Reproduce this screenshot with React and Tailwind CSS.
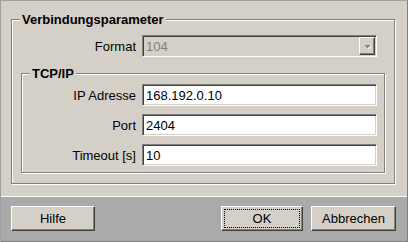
import React from "react";

const Field = ({ value }) => (
  <div className="w-[235px] h-[22px] bg-white border border-t-[#808080] border-l-[#808080] border-r-white border-b-white shadow-[inset_1px_1px_0_#404040,inset_-1px_-1px_0_#d4d0c8] flex items-center pl-[3px] text-black">
    {value}
  </div>
);

const Combo = ({ value }) => (
  <div className="w-[235px] h-[22px] bg-[#d4d0c8] border border-t-[#808080] border-l-[#808080] border-r-white border-b-white shadow-[inset_1px_1px_0_#404040,inset_-1px_-1px_0_#d4d0c8] flex p-[1px]">
    <span className="flex-1 flex items-center pl-[2px] text-[#808080]">{value}</span>
    <span className="w-[16px] flex items-center justify-center bg-[#d4d0c8] border border-t-white border-l-white border-r-[#404040] border-b-[#404040] shadow-[inset_-1px_-1px_0_#808080]">
      <svg width="7" height="5" viewBox="0 0 7 5">
        <path d="M1 1h5v1h-1v1h-1v1h-1v-1h-1v-1h-1z" fill="#808080" />
        <path d="M4 4h1v-1h1v-1h1v1h-1v1h-1v1h-1z" fill="#ffffff" />
      </svg>
    </span>
  </div>
);

const Button = ({ children, className, focus }) => (
  <button
    type="button"
    className={
      "relative h-[25px] bg-[#d4d0c8] border border-t-white border-l-white border-r-[#404040] border-b-[#404040] shadow-[inset_-1px_-1px_0_#808080] text-black text-[13px] leading-none " +
      className
    }
  >
    {focus && (
      <span className="absolute inset-[2px] border border-dotted border-black" />
    )}
    {children}
  </button>
);

export default function App() {
  return (
    <div className="w-[408px] h-[242px] flex flex-col bg-[#d4d0c8] border border-t-[#a0a0a0] border-l-[#a0a0a0] border-r-[#808080] border-b-[#808080] font-['Liberation_Sans',Arial,sans-serif] text-[13px] leading-[15px] text-black select-none">
      <div className="h-[195px] pt-[18px] pl-[10px]">
        <div className="relative w-[384px] h-[165px] border border-[#808080] shadow-[inset_1px_1px_0_#ffffff,1px_1px_0_#ffffff] pt-[15px]">
          <span className="absolute left-[8px] top-[-8px] px-[2px] bg-[#d4d0c8] font-bold">
            Verbindungsparameter
          </span>

          <div className="flex items-center gap-[6px]">
            <span className="w-[124px] text-right">Format</span>
            <Combo value="104" />
          </div>

          <div className="relative mx-[9px] mt-[16px] h-[100px] border border-[#808080] shadow-[inset_1px_1px_0_#ffffff,1px_1px_0_#ffffff] pt-[10px] flex flex-col gap-[8px]">
            <span className="absolute left-[8px] top-[-8px] px-[2px] bg-[#d4d0c8] font-bold">
              TCP/IP
            </span>
            <div className="flex items-center gap-[6px]">
              <span className="w-[114px] text-right">IP Adresse</span>
              <Field value="168.192.0.10" />
            </div>
            <div className="flex items-center gap-[6px]">
              <span className="w-[114px] text-right">Port</span>
              <Field value="2404" />
            </div>
            <div className="flex items-center gap-[6px]">
              <span className="w-[114px] text-right">Timeout [s]</span>
              <Field value="10" />
            </div>
          </div>
        </div>
      </div>

      <div className="flex-1 flex items-start bg-[#aaaaaa] border-t border-white pt-[9px] pl-[10px] pr-[11px]">
        <Button className="w-[84px]">Hilfe</Button>
        <div className="flex-1" />
        <Button className="w-[82px]" focus>
          OK
        </Button>
        <Button className="w-[85px] ml-[8px]">Abbrechen</Button>
      </div>
    </div>
  );
}
